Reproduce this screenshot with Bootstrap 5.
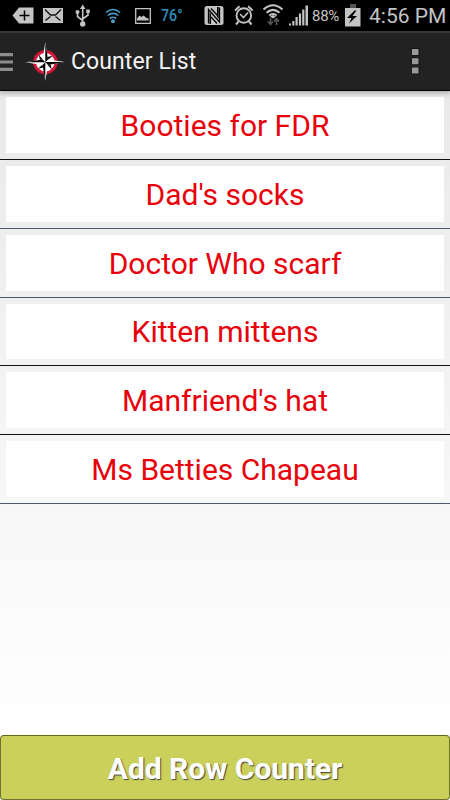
<!DOCTYPE html>
<html lang="en">
<head>
<meta charset="utf-8">
<meta name="viewport" content="width=device-width, initial-scale=1">
<title>Counter List</title>
<link href="https://cdn.jsdelivr.net/npm/bootstrap@5.3.0/dist/css/bootstrap.min.css" rel="stylesheet">
<style>
body{font-family:Roboto,"Liberation Sans",sans-serif;background:linear-gradient(#e6e6e6,#fff 92%);height:800px;overflow:hidden}
.status{height:31px;background:#000;color:#c4c4c4}
.status svg,.status span{flex:none;height:31px;line-height:32px;white-space:nowrap}
.temp{width:42px;color:#2f8fb8;font-size:16.5px;font-weight:500;padding-left:7px;transform-origin:left}
.temp b{display:inline-block;transform:scaleX(.86);transform-origin:left;font-weight:500}
.pct{width:32px;font-size:15px;letter-spacing:-.3px}
.clock{width:84px;font-size:21px;padding-left:3px}
.appbar{height:60px;background:#222;border-top:2px solid #383638;border-bottom:1px solid #000;box-shadow:0 1px 5px 1px rgba(0,0,0,.28);z-index:1}
.appbar h1{font-size:23px;color:#f3f3f3;line-height:1;letter-spacing:.1px}
.rows{--bs-list-group-bg:transparent}
.counter{height:68.8px;padding:6px;border:0;border-bottom:1px solid #111!important;background:transparent}
.counter.soft{border-bottom-color:#4e5870!important}
.counter:first-child{height:69px}
.face{background:#fff;color:#e8000b;font-size:30px;line-height:1;padding-top:2px}
.face:focus{color:#e8000b}
.add{height:65px;background:#cad059;border:1px solid #6e7430;border-top-color:#626818;border-radius:4px;color:#fff;font-size:30px;font-weight:700;line-height:1;text-shadow:1px 1px 1px #444;padding:3px 0 0}
.add:hover{background:#cad059;color:#fff}
</style>
<script src="https://cdn.jsdelivr.net/npm/bootstrap@5.3.0/dist/js/bootstrap.bundle.min.js"></script>
</head>
<body class="d-flex flex-column m-0">
<div class="status d-flex">
  <svg width="38" viewBox="0 0 38 31"><path d="M12.5 15.5 19 7.5h14.5v16H19z" fill="#c4c4c4"/><path d="M24.500 10.500v10M19.500 15.500h10" stroke="#000" stroke-width="1.500"/></svg>
  <svg width="32" viewBox="38 0 32 31"><path d="M43 8h20v15H43z" fill="#c4c4c4"/><path d="M45 9.500 50.500 15h5L61 9.500M45.500 20.500l5-4M60.500 20.500l-5-4" fill="none" stroke="#111" stroke-width="1.300"/></svg>
  <svg width="28" viewBox="70 0 28 31"><g fill="none" stroke="#c4c4c4" stroke-width="1.600"><path d="M82.700 8v15M77.500 12v4.500l5.200 4M88 11v4l-5.300 4"/></g><path d="m82.700 4.500 2.800 4.500h-5.600zM86.200 9.500h3.600v3.600h-3.600z" fill="#c4c4c4"/><circle cx="77.500" cy="12" r="2" fill="#c4c4c4"/><circle cx="82.700" cy="24" r="2.700" fill="#c4c4c4"/></svg>
  <svg width="32" viewBox="98 0 32 31"><g fill="none" stroke="#4d9cc4" stroke-width="1.600"><path d="M106 12.500q7-6 14 0M107.800 15.500q5.200-4.300 10.400 0M109.800 18.500q3.200-2.500 6.400 0"/></g><circle cx="113" cy="21.300" r="2" fill="#4d9cc4"/></svg>
  <svg width="24" viewBox="130 0 24 31"><path d="M135.700 8.700h14.600v14.600h-14.600z" fill="none" stroke="#c4c4c4" stroke-width="1.300"/><path d="M137 20.500v-2l2.500-3 2 1.500 2-1.500 3 2.500 2 .5v2z" fill="#c4c4c4"/></svg>
  <span class="temp"><b>76°</b></span>
  <svg width="32" viewBox="196 0 32 31"><rect x="204.500" y="6" width="19" height="19" rx="2.500" fill="#c4c4c4"/><path d="M208.500 23.500V9.500L219.500 22V7.500M211 8.500 217.500 15.500M211 17 217 23.500" fill="none" stroke="#000" stroke-width="1.300"/><path d="M211 14v10h-1.500V12.200zM217 16.800V7h1.700v11.700z" fill="#000"/></svg>
  <svg width="30" viewBox="228 0 30 31"><g fill="none" stroke="#c4c4c4"><circle cx="243.800" cy="15.500" r="7.300" stroke-width="1.900"/><path d="m240 14 3.500 3.500 4.500-5" stroke-width="1.600"/><path d="m235 10.500 4.500-4.300M252.600 10.500l-4.500-4.300M238.500 21.500l-2.500 3M249 21.500l2.500 3" stroke-width="2"/></g></svg>
  <svg width="30" viewBox="258 0 30 31"><g fill="none" stroke="#c4c4c4" stroke-width="2"><path d="M263.500 9.500q9.500-8.500 19 0M266.500 12.700q6.500-5.700 13 0M269.300 15.500q3.700-3 7.400 0"/></g><path d="m270 16.500 3-1.500 3 1.500-3 2z" fill="#c4c4c4"/><path d="M270.500 18v6m-2.500-2.500 2.500 3 2.500-3M276.500 25v-6m-2.500 2.500 2.500-3 2.500 3" stroke="#555" stroke-width="1.700" fill="none"/></svg>
  <svg width="24" viewBox="288 0 24 31"><path d="M289 25.500v-2h2v2zM292.300 25.500v-4.500h2.100v4.500zM295.500 25.500V17h2.200v8.500zM298.900 25.500v-12h2.200v12zM302.200 25.500v-16h2.200v16zM305.500 25.500v-20h2.500v20z" fill="#c4c4c4"/></svg>
  <span class="pct">88%</span>
  <svg width="22" viewBox="344 0 22 31"><path d="M350 4h6v4h-6z" fill="#555"/><path d="M345 8h15.500v18.500H345z" fill="#c4c4c4"/><path d="m354.500 10.500-7.500 7.500h4.500l-2.500 5.500 8-7.500h-4.500l4-5.500z" fill="#000"/></svg>
  <span class="clock">4:56 PM</span>
</div>
<header class="appbar d-flex align-items-center position-relative flex-shrink-0">
  <svg width="25" height="57" viewBox="0 33 25 57"><path d="M0 53h13v3.200H0zM0 60.400h13v3.200H0zM0 67.800h13V71H0z" fill="#8c8c8c"/></svg>
  <svg width="46" height="57" viewBox="25 33 46 57"><circle cx="45.300" cy="62.200" r="10.700" fill="#fff" stroke="#d31638" stroke-width="3"/><path d="m45.300 62.200-6.500-7.500 2 9.500zM45.300 62.200l7.500-6.500-9.500 2zM45.300 62.200l6.500 7.500-2-9.500zM45.300 62.200l-7.500 6.500 9.500-2z" fill="#111"/><path d="m45.300 42 2.700 17.500L64.500 62 48 65l-2.700 16-2.700-16L25.500 62.200l17.100-2.700z" fill="#fff"/><path d="M45.300 42v20.200L48 59.500zM64.500 62H45.300l2.700 3zM45.300 81V62.200L42.600 65zM25.500 62.200h19.800l-2.700-2.700z" fill="#000"/></svg>
  <h1 class="m-0 fw-normal">Counter List</h1>
  <svg class="ms-auto" width="70" height="57" viewBox="380 33 70 57"><path d="M411.500 48h8v7.500h-8zM411.500 57.500h8V65h-8zM411.500 67h8v7.500h-8z" fill="#111"/><path d="M412 49h6.500v6H412zM412 58.300h6.500v6H412zM412 67.600h6.500v6H412z" fill="#999"/></svg>
</header>
<main class="rows list-group list-group-flush">
  <div class="counter list-group-item d-flex"><div class="face flex-fill d-flex align-items-center justify-content-center">Booties for FDR</div></div>
  <div class="counter soft list-group-item d-flex"><div class="face flex-fill d-flex align-items-center justify-content-center">Dad's socks</div></div>
  <div class="counter soft list-group-item d-flex"><div class="face flex-fill d-flex align-items-center justify-content-center">Doctor Who scarf</div></div>
  <div class="counter list-group-item d-flex"><div class="face flex-fill d-flex align-items-center justify-content-center">Kitten mittens</div></div>
  <div class="counter list-group-item d-flex"><div class="face flex-fill d-flex align-items-center justify-content-center">Manfriend's hat</div></div>
  <div class="counter soft list-group-item d-flex"><div class="face flex-fill d-flex align-items-center justify-content-center">Ms Betties Chapeau</div></div>
</main>
<button type="button" class="add btn w-100 mt-auto flex-shrink-0">Add Row Counter</button>
</body>
</html>
